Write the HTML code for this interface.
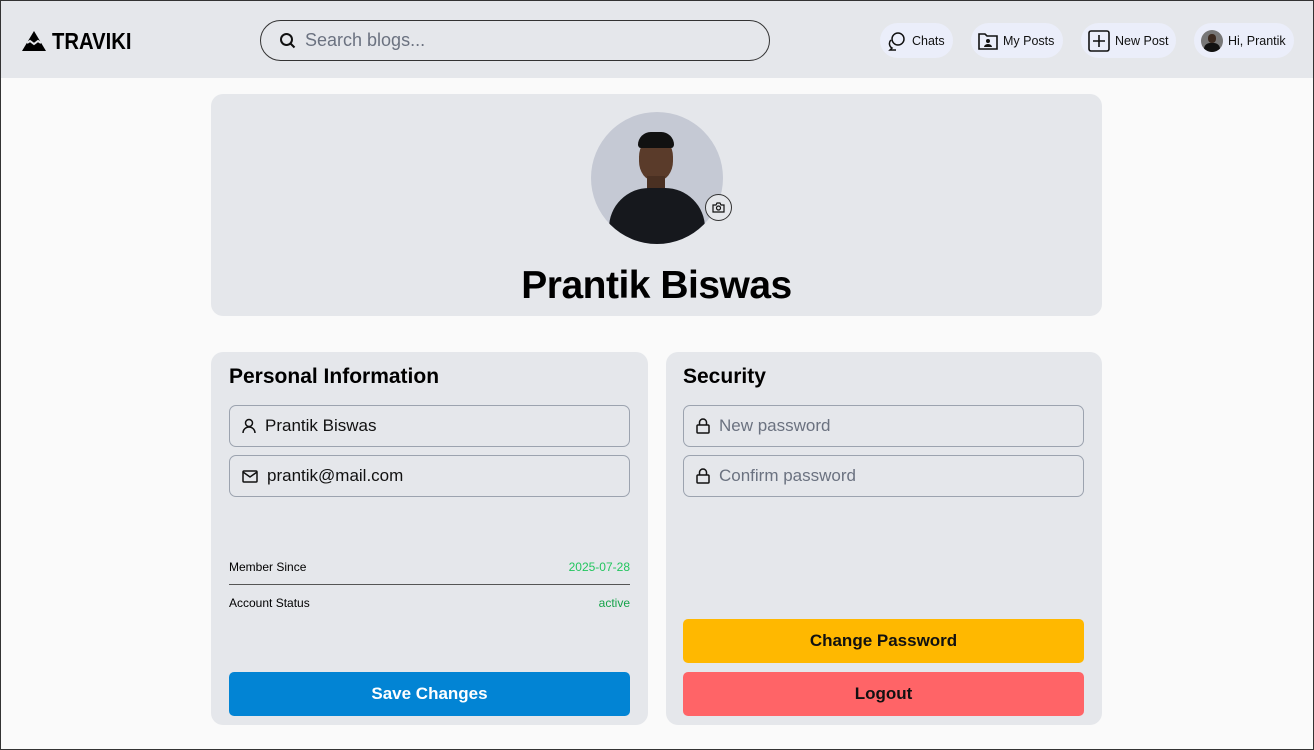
<!DOCTYPE html><html><head><style>
*{box-sizing:border-box;margin:0;padding:0}
body{width:1314px;height:750px;background:#fafafa;font-family:"Liberation Sans",sans-serif;position:relative;overflow:hidden}
.frame{position:absolute;left:0;top:0;width:1314px;height:750px;border:1px solid #333;pointer-events:none}
.hdr{position:absolute;left:0;top:0;width:1314px;height:78px;background:#e5e7eb}
.abs{position:absolute}
.pill{position:absolute;top:23px;height:35px;border-radius:18px;background:#ebeefa;font-size:12.5px;display:flex;align-items:center;padding:0 7px;gap:5px;color:#111;white-space:nowrap}
.card{position:absolute;background:#e5e7eb;border-radius:12px}
.inp{position:absolute;left:18px;width:401px;height:42px;border:1px solid #9ca3af;border-radius:7px;display:flex;align-items:center;padding-left:12px;gap:9px;font-size:17px;color:#111}
.ph{color:#6b7280}
.btn{position:absolute;left:18px;width:401px;height:44px;border-radius:5px;display:flex;align-items:center;justify-content:center;font-size:17px;font-weight:bold}
</style></head><body>
<div class="hdr">
 <svg class="abs" style="left:22px;top:31px" width="24" height="20" viewBox="0 0 24 20"><path d="M12 0L24 20H0Z" fill="#000"/><path d="M5 12l3-2 4 3 4-3 3 2" stroke="#e5e7eb" stroke-width="2" fill="none"/></svg>
 <div class="abs" style="left:52px;top:28px;font-size:23px;font-weight:bold;transform:scaleX(0.88);transform-origin:left">TRAVIKI</div>
 <div class="abs" style="left:260px;top:20px;width:510px;height:41px;border:1px solid #333;border-radius:21px;display:flex;align-items:center;padding-left:18px;gap:8px;font-size:18px;color:#6b7280">
  <svg width="18" height="18" viewBox="0 0 18 18"><circle cx="7.5" cy="7.5" r="5.5" stroke="#111" stroke-width="2" fill="none"/><path d="M11.5 11.5l4 4" stroke="#111" stroke-width="2"/></svg>Search blogs...</div>
 <div class="pill" style="left:880px;width:73px"><svg width="20" height="20" viewBox="0 0 20 20" fill="none" stroke="#111" stroke-width="1.5"><circle cx="11" cy="8" r="6"/><path d="M4 9a5 5 0 0 0 1 8l-2 2h6"/></svg>Chats</div>
 <div class="pill" style="left:971px;width:92px"><svg width="20" height="18" viewBox="0 0 20 18"><path d="M1 2h6l2 2h10v13H1z" fill="none" stroke="#111" stroke-width="1.6"/><circle cx="10" cy="9" r="2" fill="#111"/><path d="M6 15a4 3 0 0 1 8 0z" fill="#111"/></svg>My Posts</div>
 <div class="pill" style="left:1081px;width:95px"><svg width="22" height="22" viewBox="0 0 22 22" fill="none" stroke="#111" stroke-width="1.6"><rect x="1" y="1" width="20" height="20" rx="2"/><path d="M11 5v12M5 11h12"/></svg>New Post</div>
 <div class="pill" style="left:1194px;width:100px"><div style="width:22px;height:22px;border-radius:50%;background:#777;overflow:hidden;flex:none"><div style="margin:4px 0 0 7px;width:8px;height:9px;border-radius:45%;background:#3b2a20"></div><div style="margin:0 0 0 3px;width:16px;height:10px;background:#111;border-radius:6px 6px 0 0"></div></div>Hi, Prantik</div>
</div>
<div class="card" style="left:211px;top:94px;width:891px;height:222px">
 <div class="abs" style="left:380px;top:18px;width:132px;height:132px;border-radius:50%;background:#c5c9d4;overflow:hidden">
  <div class="abs" style="left:48px;top:25px;width:34px;height:44px;border-radius:45%;background:#5a3b2a"></div>
  <div class="abs" style="left:47px;top:20px;width:36px;height:16px;border-radius:16px 16px 4px 4px;background:#111"></div>
  <div class="abs" style="left:56px;top:64px;width:18px;height:16px;background:#4a3022"></div>
  <div class="abs" style="left:18px;top:76px;width:96px;height:70px;border-radius:40px 40px 0 0;background:#16181d"></div>
 </div>
 <div class="abs" style="left:494px;top:100px;width:27px;height:27px;border-radius:50%;background:#e5e7eb;border:1px solid #333;display:flex;align-items:center;justify-content:center"><svg width="13" height="11" viewBox="0 0 13 11" fill="none" stroke="#111" stroke-width="1.2"><path d="M1 3h3l1-2h3l1 2h3v7H1z"/><circle cx="6.5" cy="6" r="2"/></svg></div>
 <div class="abs" style="left:0;width:891px;top:170px;text-align:center;font-size:39px;font-weight:bold;letter-spacing:-0.5px">Prantik Biswas</div>
</div>
<div class="card" style="left:211px;top:352px;width:437px;height:373px">
 <div class="abs" style="left:18px;top:13px;font-size:21px;font-weight:bold">Personal Information</div>
 <div class="inp" style="top:53px"><svg width="14" height="16" viewBox="0 0 14 16" fill="none" stroke="#111" stroke-width="1.5"><circle cx="7" cy="5" r="3.5"/><path d="M1 15a6 6 0 0 1 12 0"/></svg>Prantik Biswas</div>
 <div class="inp" style="top:103px"><svg width="16" height="13" viewBox="0 0 16 13" fill="none" stroke="#111" stroke-width="1.5"><rect x="1" y="1" width="14" height="11" rx="1"/><path d="M1 2l7 5 7-5"/></svg>prantik@mail.com</div>
 <div class="abs" style="left:18px;top:208px;font-size:12px">Member Since</div>
 <div class="abs" style="right:18px;top:208px;font-size:12px;color:#22c55e">2025-07-28</div>
 <div class="abs" style="left:18px;top:232px;width:401px;border-top:1px solid #555"></div>
 <div class="abs" style="left:18px;top:244px;font-size:12px">Account Status</div>
 <div class="abs" style="right:18px;top:244px;font-size:12px;color:#16a34a">active</div>
 <div class="btn" style="top:320px;background:#0284d4;color:#fff">Save Changes</div>
</div>
<div class="card" style="left:666px;top:352px;width:436px;height:373px">
 <div class="abs" style="left:17px;top:13px;font-size:21px;font-weight:bold">Security</div>
 <div class="inp ph" style="left:17px;top:53px"><svg width="14" height="16" viewBox="0 0 14 16" fill="none" stroke="#111" stroke-width="1.5"><rect x="1" y="7" width="12" height="8" rx="1"/><path d="M3.5 7V4.5a3.5 3.5 0 0 1 7 0V7"/></svg>New password</div>
 <div class="inp ph" style="left:17px;top:103px"><svg width="14" height="16" viewBox="0 0 14 16" fill="none" stroke="#111" stroke-width="1.5"><rect x="1" y="7" width="12" height="8" rx="1"/><path d="M3.5 7V4.5a3.5 3.5 0 0 1 7 0V7"/></svg>Confirm password</div>
 <div class="btn" style="left:17px;top:267px;background:#ffb800;color:#111">Change Password</div>
 <div class="btn" style="left:17px;top:320px;background:#ff6467;color:#111">Logout</div>
</div>
<div class="frame"></div>
</body></html>
